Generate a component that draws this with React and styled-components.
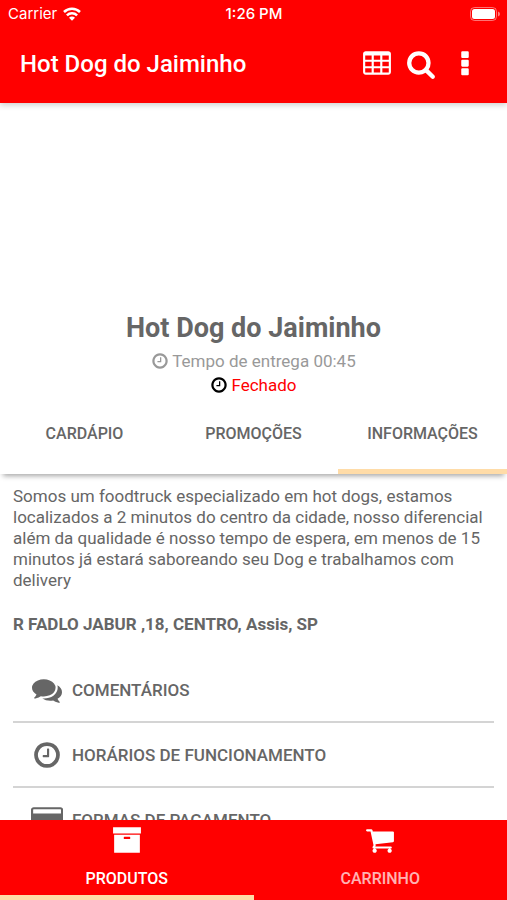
import React, { useState } from 'react'
import styled, { createGlobalStyle, ThemeProvider } from 'styled-components'

const theme = {
  colors: {
    primary: '#ff0000',
    accent: '#ffdca8',
    text: '#666666',
    muted: '#999999',
  },
}

const icons = {
  clock:
    'M1024 544v448q0 14-9 23t-23 9h-320q-14 0-23-9t-9-23v-64q0-14 9-23t23-9h224v-352q0-14 9-23t23-9h64q14 0 23 9t9 23zm416 352q0-148-73-273t-198-198-273-73-273 73-198 198-73 273 73 273 198 198 273 73 273-73 198-198 73-273zm224 0q0 209-103 385.5t-279.5 279.5-385.5 103-385.5-103-279.5-279.5-103-385.5 103-385.5 279.5-279.5 385.5-103 385.5 103 279.5 279.5 103 385.5z',
  search:
    'M1216 832q0-185-131.5-316.5t-316.5-131.5-316.5 131.5-131.5 316.5 131.5 316.5 316.5 131.5 316.5-131.5 131.5-316.5zm512 832q0 52-38 90t-90 38q-54 0-90-38l-343-342q-179 124-399 124-143 0-273.5-55.5t-225-150-150-225-55.5-273.5 55.5-273.5 150-225 225-150 273.5-55.5 273.5 55.5 225 150 150 225 55.5 273.5q0 220-124 399l343 343q37 37 37 90z',
  table:
    'M224 128h1344q66 0 113 47t47 113v1088q0 66-47 113t-113 47h-1344q-66 0-113-47t-47-113v-1088q0-66 47-113t113-47zM192 384v256h384v-256zM704 384v256h384v-256zM1216 384v256h384v-256zM192 768v256h384v-256zM704 768v256h384v-256zM1216 768v256h384v-256zM192 1152v256h384v-256zM704 1152v256h384v-256zM1216 1152v256h384v-256z',
  more:
    'M736 128h320q64 0 64 64v288q0 64-64 64h-320q-64 0-64-64v-288q0-64 64-64zM736 640h320q64 0 64 64v288q0 64-64 64h-320q-64 0-64-64v-288q0-64 64-64zM736 1152h320q64 0 64 64v288q0 64-64 64h-320q-64 0-64-64v-288q0-64 64-64z',
  comments:
    'M1408 768q0 139-94 257t-256.5 186.5-353.5 68.5q-86 0-176-16-124 88-278 128-36 9-86 16h-3q-11 0-20.5-8t-11.5-21q-1-3-1-6.5t.5-6.5 2-6l2.5-5 3.5-5.5 4-5 4.5-5 4-4.5q5-6 23-25t26-29.5 22.5-29 25-38.5 20.5-44q-124-72-195-177t-71-224q0-139 94-257t256.5-186.5 353.5-68.5 353.5 68.5 256.5 186.5 94 257zm384 256q0 120-71 224.5t-195 176.5q10 24 20.5 44t25 38.5 22.5 29 26 29.5 23 25q1 1 4 4.5t4.5 5 4 5 3.5 5.5l2.5 5 2 6 .5 6.5-1 6.5q-3 14-13 22t-22 7q-50-7-86-16-154-40-278-128-90 16-176 16-271 0-472-132 58 4 88 4 161 0 309-45t264-129q125-92 192-212t67-254q0-77-23-152 129 71 204 178t75 230z',
  card:
    'M1760 128q66 0 113 47t47 113v1216q0 66-47 113t-113 47h-1600q-66 0-113-47t-47-113v-1216q0-66 47-113t113-47h1600zm-1600 128q-13 0-22.5 9.5t-9.5 22.5v224h1664v-224q0-13-9.5-22.5t-22.5-9.5h-1600z',
  archive:
    'M64 128h1664v384h-1664zM128 576h1536v1088h-1536zM736 704q-32 0-32 32v64q0 32 32 32h320q32 0 32-32v-64q0-32-32-32z',
  cart:
    'M704 1536q0 52-38 90t-90 38-90-38-38-90 38-90 90-38 90 38 38 90zm896 0q0 52-38 90t-90 38-90-38-38-90 38-90 90-38 90 38 38 90zm128-1088v512q0 24-16.5 42.5t-40.5 21.5l-1044 122q13 60 13 70 0 16-24 64h920q26 0 45 19t19 45-19 45-45 19h-1024q-26 0-45-19t-19-45q0-11 8-31.5t16-36 21.5-40 15.5-29.5l-177-823h-204q-26 0-45-19t-19-45 19-45 45-19h256q16 0 28.5 6.5t19.5 15.5 13 24.5 8 26 5.5 29.5 4.5 26h1201q26 0 45 19t19 45z',
}

const Icon = ({ name, size = 30 }) => {
  const width = name === 'card' ? 1920 : 1792
  return (
    <svg
      width={(size * width) / 1792}
      height={size}
      viewBox={`0 0 ${width} 1792`}
      fill="currentColor"
      fillRule="evenodd"
      aria-hidden="true"
    >
      <path d={icons[name]} />
    </svg>
  )
}

const Wifi = () => (
  <svg width="18" height="14" viewBox="0 0 18 14" fill="none" stroke="#fff" strokeWidth="2.5" aria-hidden="true">
    <path d="M1 5a11.4 11.4 0 0 1 16 0" />
    <path d="M3.9 8.3a7.3 7.3 0 0 1 10.2 0" />
    <path d="M9 13.8L6 10.8a4.2 4.2 0 0 1 6 0z" fill="#fff" stroke="none" />
  </svg>
)

const Battery = () => (
  <svg width="30" height="14" viewBox="0 0 30 14" aria-hidden="true">
    <rect x="0.5" y="0.5" width="26" height="13" rx="4" fill="none" stroke="#fff" strokeOpacity="0.45" />
    <rect x="2" y="2" width="23" height="10" rx="2.5" fill="#fff" />
    <path d="M28 4.6q2 .8 2 2.4t-2 2.4z" fill="#fff" fillOpacity="0.5" />
  </svg>
)

const tabs = ['CARDÁPIO', 'PROMOÇÕES', 'INFORMAÇÕES']

const sections = [
  { icon: 'comments', text: 'COMENTÁRIOS' },
  { icon: 'clock', text: 'HORÁRIOS DE FUNCIONAMENTO' },
  { icon: 'card', text: 'FORMAS DE PAGAMENTO' },
]

const footerTabs = [
  { icon: 'archive', text: 'PRODUTOS' },
  { icon: 'cart', text: 'CARRINHO' },
]

const App = () => {
  const [tab, setTab] = useState('INFORMAÇÕES')
  const [footerTab, setFooterTab] = useState('PRODUTOS')

  return (
    <ThemeProvider theme={theme}>
      <GlobalStyle />
      <Screen>
        <Header>
          <StatusBar>
            <Carrier>
              Carrier
              <Wifi />
            </Carrier>
            <Time>1:26 PM</Time>
            <BatteryWrapper>
              <Battery />
            </BatteryWrapper>
          </StatusBar>
          <Toolbar>
            <Title>Hot Dog do Jaiminho</Title>
            <IconButton aria-label="Mesas">
              <Icon name="table" />
            </IconButton>
            <IconButton aria-label="Buscar">
              <Icon name="search" />
            </IconButton>
            <IconButton aria-label="Mais opções">
              <Icon name="more" />
            </IconButton>
          </Toolbar>
        </Header>
        <Content>
          <Store>
            <StoreName>Hot Dog do Jaiminho</StoreName>
            <Delivery>
              <Icon name="clock" size={18} />
              Tempo de entrega 00:45
            </Delivery>
            <Status>
              <Icon name="clock" size={18} />
              <span>Fechado</span>
            </Status>
          </Store>
          <Tabs>
            {tabs.map(text => (
              <Tab key={text} $active={text === tab} onClick={() => setTab(text)}>
                {text}
              </Tab>
            ))}
          </Tabs>
          <Info>
            <Description>
              Somos um foodtruck especializado em hot dogs, estamos localizados
              a 2 minutos do centro da cidade, nosso diferencial além da
              qualidade é nosso tempo de espera, em menos de 15 minutos já
              estará saboreando seu Dog e trabalhamos com delivery
            </Description>
            <Address>R FADLO JABUR ,18, CENTRO, Assis, SP</Address>
            {sections.map(({ icon, text }) => (
              <Section key={text}>
                <SectionIcon>
                  <Icon name={icon} />
                </SectionIcon>
                {text}
              </Section>
            ))}
          </Info>
        </Content>
        <Footer>
          {footerTabs.map(({ icon, text }) => (
            <FooterTab
              key={text}
              $active={text === footerTab}
              onClick={() => setFooterTab(text)}
            >
              <Icon name={icon} />
              <FooterLabel $active={text === footerTab}>{text}</FooterLabel>
            </FooterTab>
          ))}
        </Footer>
      </Screen>
    </ThemeProvider>
  )
}

export default App

const GlobalStyle = createGlobalStyle`
  * {
    box-sizing: border-box;
  }
  body {
    margin: 0;
    background: #fff;
    color: ${p => p.theme.colors.text};
    font-family: Roboto, sans-serif;
    font-size: 17px;
  }
  button {
    margin: 0;
    padding: 0;
    border: 0;
    background: none;
    color: inherit;
    font: inherit;
    cursor: pointer;
  }
  svg {
    display: block;
    flex: none;
  }
`

const Screen = styled.div`
  display: flex;
  flex-direction: column;
  height: 100vh;
`

const Header = styled.header`
  position: relative;
  z-index: 1;
  flex: none;
  background: ${p => p.theme.colors.primary};
  color: #fff;
  box-shadow: 0 2px 6px rgba(0, 0, 0, 0.2);
`

const StatusBar = styled.div`
  display: grid;
  grid-template-columns: 1fr auto 1fr;
  align-items: center;
  height: 27px;
  padding: 0 7px 0 8px;
  font-family: Inter, sans-serif;
  font-size: 15px;
`

const Carrier = styled.div`
  display: flex;
  align-items: center;
  gap: 6px;
`

const Time = styled.div`
  font-weight: 500;
`

const BatteryWrapper = styled.div`
  display: flex;
  justify-content: flex-end;
`

const Toolbar = styled.div`
  display: flex;
  align-items: center;
  height: 76px;
  padding: 0 20px 2px;
`

const Title = styled.h1`
  flex: 1;
  margin: 0;
  font-size: 24px;
  font-weight: 500;
`

const IconButton = styled.button`
  display: flex;
  align-items: center;
  justify-content: center;
  width: 44px;
  height: 44px;
`

const Content = styled.main`
  flex: 1;
  min-height: 0;
  overflow: hidden;
`

const Store = styled.section`
  display: flex;
  flex-direction: column;
  align-items: center;
  padding-top: 207px;
`

const StoreName = styled.h2`
  margin: 0;
  font-size: 27px;
  font-weight: 700;
  line-height: 36px;
`

const Delivery = styled.div`
  display: flex;
  align-items: center;
  gap: 3px;
  color: ${p => p.theme.colors.muted};
  line-height: 30px;
`

const Status = styled.div`
  display: flex;
  align-items: center;
  gap: 3px;
  color: #000;
  line-height: 18px;
  span {
    color: ${p => p.theme.colors.primary};
  }
`

const Tabs = styled.nav`
  display: flex;
  height: 80px;
  box-shadow: 0 5px 5px -3px rgba(0, 0, 0, 0.35);
`

const Tab = styled.button`
  flex: 1;
  padding-top: 4px;
  border-bottom: 5px solid
    ${p => (p.$active ? p.theme.colors.accent : 'transparent')};
  font-size: 16px;
  font-weight: 500;
`

const Info = styled.section`
  padding: 12px 13px;
`

const Description = styled.p`
  margin: 0;
  line-height: 21px;
`

const Address = styled.p`
  margin: 23px 0;
  font-weight: 700;
  line-height: 21px;
`

const Section = styled.button`
  display: flex;
  align-items: center;
  gap: 8px;
  width: 100%;
  height: 65px;
  padding-left: 17px;
  border-bottom: 2px solid #d4d4d4;
  font-weight: 500;
`

const SectionIcon = styled.span`
  display: flex;
  justify-content: center;
  width: 34px;
`

const Footer = styled.footer`
  display: flex;
  flex: none;
  height: 80px;
  background: ${p => p.theme.colors.primary};
  color: #fff;
`

const FooterTab = styled.button`
  display: flex;
  flex: 1;
  flex-direction: column;
  align-items: center;
  gap: 14px;
  padding-top: 5px;
  border-bottom: 5px solid
    ${p => (p.$active ? p.theme.colors.accent : 'transparent')};
`

const FooterLabel = styled.span`
  opacity: ${p => (p.$active ? 1 : 0.7)};
  font-size: 16px;
  font-weight: 500;
  line-height: 20px;
`
